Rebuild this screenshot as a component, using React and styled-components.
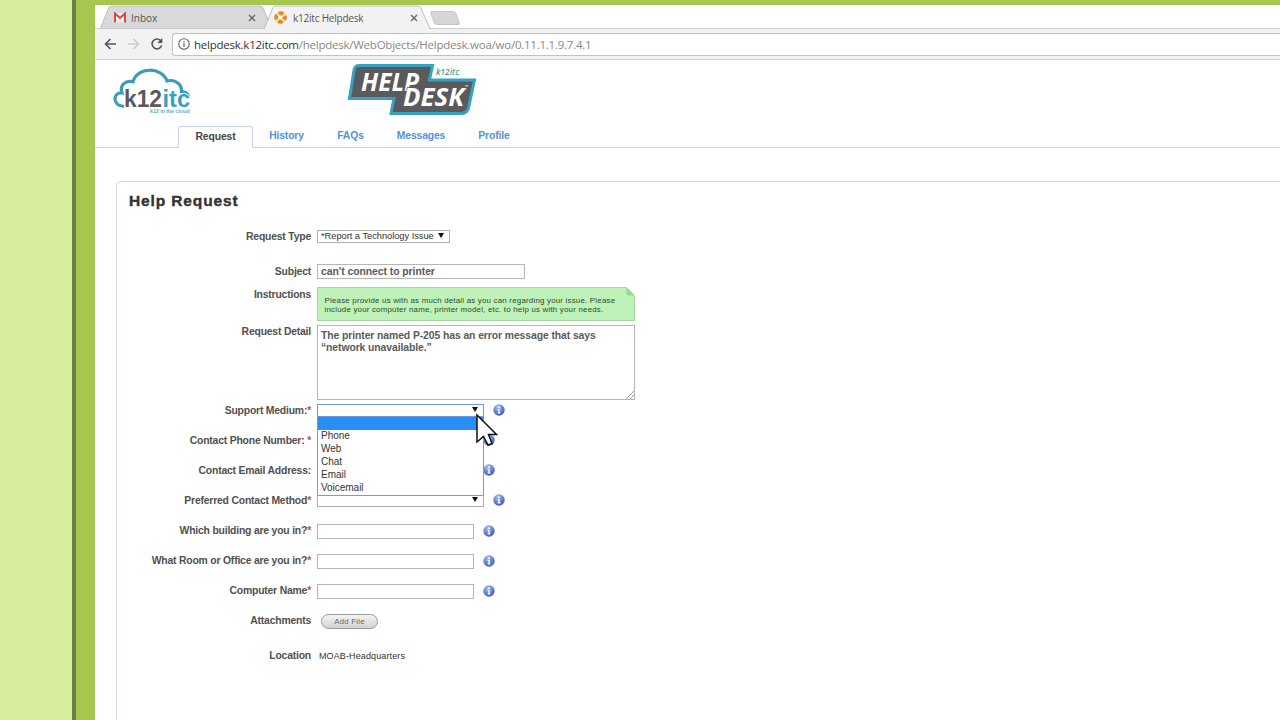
import React from 'react';
import styled, { createGlobalStyle } from 'styled-components';


const GlobalStyle = createGlobalStyle`
    body {
        margin: 0;
        overflow: hidden;
        font-family: "Liberation Sans", Arial, sans-serif;
    }

    * {
        box-sizing: border-box;
    }
`;

const Page = styled.div`
    display: flex;
    width: 1280px;
    height: 720px;
    background: #d6ed9e;
    padding-left: 72px;
    overflow: hidden;
`;

const Frame = styled.div`
    flex: 1;
    min-width: 0;
    border-left: 4px solid #6a8048;
    background: #a6c64f;
    padding: 5px 0 0 19px;
`;

const Browser = styled.div`
    height: 715px;
    background: #fff;
    overflow: hidden;
`;

const TabStrip = styled.div`
    display: flex;
    height: 24px;
    padding-left: 4px;
    border-bottom: 1px solid #cfcfcf;
`;

const BrowserTab = styled.div`
    position: relative;
    display: flex;
    align-items: center;
    width: ${props => props.$width}px;
    height: 24px;
    margin-right: -9px;
    padding: 1px ${props => props.$right}px 0 ${props => props.$left}px;
    z-index: ${props => (props.$active ? 2 : 1)};
`;

const TabShape = styled.svg`
    position: absolute;
    left: 0;
    top: 0;
    z-index: -1;
`;

const TabTitle = styled.span`
    flex: 1;
    margin-left: ${props => props.$gap}px;
    font-family: "Open Sans", sans-serif;
    font-size: 10px;
    letter-spacing: ${props => props.$spacing || 0}px;
    color: #555;
    white-space: nowrap;
`;

const NewTab = styled.div`
    width: 26px;
    height: 14px;
    margin: 6px 0 0 7px;
    border: 1px solid #c6c6c6;
    border-radius: 3px;
    background: #d6d6d6;
    transform: skewX(20deg);
`;

const Toolbar = styled.div`
    display: flex;
    align-items: center;
    height: 31px;
    padding-left: 8px;
    background: #f2f2f2;
    border-bottom: 1px solid #d4d4d4;
`;

const NavIcons = styled.svg`
    flex: none;
`;

const AddressBar = styled.div`
    display: flex;
    align-items: center;
    flex: 1;
    height: 23px;
    margin-left: 8px;
    padding-left: 5px;
    border: 1px solid #c2c2c2;
    border-right: 0;
    border-radius: 3px 0 0 3px;
    background: #fff;
`;

const Url = styled.span`
    margin-left: 4px;
    font-family: "Open Sans", sans-serif;
    font-size: 11.5px;
    letter-spacing: -0.24px;
    color: #888;
    white-space: nowrap;

    b {
        font-weight: 400;
        color: #333;
    }
`;

const Header = styled.header`
    display: flex;
    height: 66px;
    padding: 3px 0 0 17px;
`;

const CloudLogo = styled.svg`
    display: block;
    margin-right: 154px;
`;

const Nav = styled.nav`
    display: flex;
    align-items: flex-end;
    height: 22px;
    padding-left: 83px;
    border-bottom: 1px solid #c5d5ec;
`;

const NavItem = styled.a`
    width: ${props => props.$width}px;
    height: 21px;
    line-height: 20px;
    text-align: center;
    font-size: 10.4px;
    letter-spacing: -0.15px;
    font-weight: 700;
    color: #5790dd;
`;

const ActiveItem = styled(NavItem)`
    height: 22px;
    margin-bottom: -1px;
    border: 1px solid #c5d5ec;
    border-bottom: 0;
    border-radius: 3px 3px 0 0;
    background: #fff;
    color: #444;
`;

const Panel = styled.main`
    height: 560px;
    margin: 33px 0 0 21px;
    border: 1px solid #d0d4dc;
    border-right: 0;
    border-radius: 5px 0 0 0;
`;

const Title = styled.h1`
    height: 39px;
    margin: 0;
    padding: 9px 0 0 12px;
    font-size: 15.5px;
    line-height: 20px;
    letter-spacing: 0.87px;
    -webkit-text-stroke: 0.4px #333;
    color: #333;
`;

const Row = styled.div`
    display: flex;
    align-items: ${props => (props.$top ? 'flex-start' : 'center')};
    height: ${props => props.$height || 20}px;
    margin-top: ${props => props.$gap || 0}px;
`;

const Label = styled.label`
    width: 194px;
    margin-right: 6px;
    padding-top: ${props => props.$drop || 0}px;
    text-align: right;
    font-size: 10.4px;
    line-height: 14px;
    letter-spacing: -0.2px;
    font-weight: 700;
    color: #505050;
    white-space: pre;
`;

const Star = styled.span`
    color: #e0384a;
`;

const Field = styled.div`
    display: flex;
    align-items: center;
    width: ${props => props.$width}px;
    height: 15px;
    padding-left: 3px;
    border: 1px solid #b5b5b5;
    background: #fff;
    font-size: 10.4px;
    letter-spacing: -0.05px;
    font-weight: 700;
    color: #5a5a5a;
    white-space: nowrap;
`;

const Select = styled.div`
    position: relative;
    display: flex;
    align-items: center;
    justify-content: space-between;
    width: ${props => props.$width}px;
    height: 13px;
    padding: 0 5px 1px 3px;
    border: 1px solid ${props => (props.$open ? '#6f97dc' : '#b0b0b0')};
    background: #fff;
    font-size: 9.3px;
    letter-spacing: -0.03px;
    color: #333;
    white-space: nowrap;
`;

const Arrow = styled.i`
    border: 3px solid transparent;
    border-top: 5px solid #111;
    border-bottom: 0;
    margin-left: auto;
`;

const Menu = styled.div`
    position: absolute;
    left: -1px;
    top: 12px;
    z-index: 3;
    width: 167px;
    height: 79px;
    border: 1px solid #7b9bd0;
    border-top: 0;
    background: #fff;
`;

const Option = styled.div`
    height: ${props => (props.$selected ? 13.6 : 12.9)}px;
    padding-left: 3px;
    line-height: 12.9px;
    font-size: 10px;
    color: #333;
    background: ${props => (props.$selected ? '#2a8ff5' : 'none')};
`;

const Cursor = styled.svg`
    position: absolute;
    left: 157px;
    top: 8px;
    z-index: 4;
`;

const Note = styled.div`
    position: relative;
    width: 318px;
    height: 34px;
    padding: 8px 0 0 6.5px;
    border: 1px solid #a3d99f;
    background: #bff2b9;
    font-size: 7.9px;
    line-height: 9.2px;
    letter-spacing: 0.21px;
    color: #2c4a2c;
    white-space: nowrap;
`;

const Fold = styled.svg`
    position: absolute;
    right: -1px;
    top: -1px;
`;

const TextArea = styled.div`
    position: relative;
    width: 318px;
    height: 75px;
    padding: 4px 0 0 3px;
    border: 1px solid #b5b5b5;
    font-size: 10.4px;
    line-height: 12px;
    letter-spacing: -0.09px;
    font-weight: 700;
    color: #5a5a5a;
    white-space: nowrap;
`;

const Grip = styled.svg`
    position: absolute;
    right: 0;
    bottom: 0;
`;

const InfoSvg = styled.svg`
    flex: none;
    margin-left: 9px;
`;

const AddButton = styled.button`
    width: 57px;
    height: 15px;
    margin-left: 4px;
    padding: 1px 0 0;
    border: 1px solid #999;
    border-radius: 8px;
    background: linear-gradient(#f4f4f4, #d2d2d2);
    font-family: inherit;
    font-size: 7.8px;
    line-height: 12px;
    letter-spacing: 0.25px;
    color: #666;
`;

const Location = styled.span`
    margin-left: 2px;
    font-size: 9px;
    letter-spacing: 0.12px;
    color: #333;
`;


const Info = () => (
    <InfoSvg width="12" height="12" viewBox="0 0 12 12">
        <defs>
            <radialGradient id="ball" cx="0.4" cy="0.25" r="0.8">
                <stop offset="0" stopColor="#a9bdf0" />
                <stop offset="0.6" stopColor="#5f7fd2" />
                <stop offset="1" stopColor="#3c56a8" />
            </radialGradient>
        </defs>
        <circle cx="6" cy="6" r="5.7" fill="url(#ball)" />
        <circle cx="6" cy="3.2" r="1" fill="#fff" />
        <path d="M4.7 5.1h2v3.5h.8v.8H4.6v-.8h.7V5.9h-.6z" fill="#fff" />
    </InfoSvg>
);

const Close = () => (
    <svg width="8" height="8" viewBox="0 0 8 8">
        <path d="M1 1l6 6M7 1L1 7" stroke="#666" strokeWidth="1.4" />
    </svg>
);

const Chrome = () => (
    <>
        <TabStrip>
            <BrowserTab $width={174} $left={14} $right={17}>
                <TabShape width="174" height="24">
                    <path d="M1 24L10 2.500Q10.500 1 12 1H161Q163 1 164 3L173 24Z" fill="#d9d9d9" stroke="#bdbdbd" />
                </TabShape>
                <svg width="14" height="11" viewBox="0 0 14 11">
                    <path d="M1 1h12v9.500H1z" fill="#f3eeee" />
                    <path d="M2 10.500V1.500L7 6l5-4.500v9" fill="none" stroke="#d34b48" strokeWidth="2" />
                </svg>
                <TabTitle $gap={4}>Inbox</TabTitle>
                <Close />
            </BrowserTab>
            <BrowserTab $active $width={170} $left={10} $right={16}>
                <TabShape width="170" height="24">
                    <path d="M0 24.500L9 2.500Q9.500 1 11 1H154Q156 1 157 3L166 24.500Z" fill="#f2f2f2" />
                    <path d="M0 24L9 2.500Q9.500 1 11 1H154Q156 1 157 3L166 24" fill="none" stroke="#bdbdbd" />
                </TabShape>
                <svg width="13" height="13" viewBox="0 0 13 13">
                    <circle cx="6.500" cy="6.500" r="4.300" fill="none" stroke="#f3d3a0" strokeWidth="3.200" />
                    <circle cx="6.500" cy="6.500" r="4.300" fill="none" stroke="#e08a1c" strokeWidth="4" strokeDasharray="4.400 2.354" strokeDashoffset="2.200" />
                </svg>
                <TabTitle $gap={6} $spacing={-0.22}>k12itc Helpdesk</TabTitle>
                <Close />
            </BrowserTab>
            <NewTab />
        </TabStrip>
        <Toolbar>
            <NavIcons width="61" height="16" viewBox="0 0 61 16" fill="none" stroke="#555" strokeWidth="1.600">
                <path d="M13 8H2.500M7.500 3L2.500 8l5 5" />
                <path d="M25 8h10.500M30.500 3l5 5-5 5" stroke="#ccc" />
                <path d="M57.500 4.500A4.900 4.900 0 1 0 58.600 9.500" />
                <path d="M59.300 2v5h-5z" fill="#555" stroke="none" />
            </NavIcons>
            <AddressBar>
                <svg width="12" height="12" viewBox="0 0 12 12" fill="none" stroke="#666">
                    <circle cx="6" cy="6" r="5.300" strokeWidth="1.100" />
                    <path d="M6 5.200V9M6 3v1.300" strokeWidth="1.300" />
                </svg>
                <Url><b>helpdesk.k12itc.com</b>/helpdesk/WebObjects/Helpdesk.woa/wo/0.11.1.1.9.7.4.1</Url>
            </AddressBar>
        </Toolbar>
    </>
);

const Logos = () => (
    <Header>
        <CloudLogo width="80" height="52" viewBox="112 63 80 52">
            <path
                d="M124 106.500C112 106 112.500 92 122 93C119.500 85.500 125 80 133 81.800C137 66.500 162 66.500 167 81C175 79 182 84 181.500 91.500C185 91.500 188 93.500 188.700 97"
                fill="none"
                stroke="#3a9dbd"
                strokeWidth="3.200"
            />
            <g fontFamily="Liberation Sans" fontWeight="700" fontSize="24.500" stroke="#fff" strokeWidth="1.600" paintOrder="stroke">
                <text x="124" y="106.500" textLength="38" lengthAdjust="spacingAndGlyphs" fill="#58595b">k12</text>
                <text x="162.500" y="106.500" textLength="27.500" lengthAdjust="spacingAndGlyphs" fill="#36a0c4">itc</text>
            </g>
            <text x="150" y="112.500" fontFamily="Liberation Sans" fontWeight="700" fontSize="5.500" textLength="39.500" fill="#62b3c8">k12 in the cloud</text>
        </CloudLogo>
        <svg width="132" height="54" viewBox="346 63 132 54">
            <path
                d="M359 65.500H432.500L429.500 80H474.500L468.500 108Q467 113.500 461 113.500H391L394 98.500H349.500L354 70Q355 65.500 359 65.500Z"
                fill="#5a5a5d"
                stroke="#35a3c0"
                strokeWidth="3"
            />
            <g fontFamily="Open Sans" fontStyle="italic" fontWeight="700" fill="#fff">
                <text x="361" y="90.500" fontSize="24.500" textLength="58" lengthAdjust="spacingAndGlyphs">HELP</text>
                <text x="403" y="105.500" fontSize="24.500" textLength="61" lengthAdjust="spacingAndGlyphs" stroke="#5a5a5d" strokeWidth="1.500" paintOrder="stroke">DESK</text>
                <text x="465" y="88" fontSize="4">™</text>
                <text x="436" y="75" fontSize="8" fontWeight="600" textLength="23" fill="#3c9a9c">k12itc</text>
            </g>
        </svg>
    </Header>
);

const options = ['', 'Phone', 'Web', 'Chat', 'Email', 'Voicemail'];

const App = () => {
    return (
        <Page>
            <GlobalStyle />
            <Frame>
                <Browser>
                    <Chrome />
                    <Logos />
                    <Nav>
                        <ActiveItem $width={75}>Request</ActiveItem>
                        <NavItem $width={67}>History</NavItem>
                        <NavItem $width={61}>FAQs</NavItem>
                        <NavItem $width={80}>Messages</NavItem>
                        <NavItem $width={66}>Profile</NavItem>
                    </Nav>
                    <Panel>
                        <Title>Help Request</Title>

                        <Row $height={30}>
                            <Label $drop={1}>Request Type</Label>
                            <Select $width={133}>*Report a Technology Issue<Arrow /></Select>
                        </Row>
                        <Row $height={31} $gap={5}>
                            <Label>Subject</Label>
                            <Field $width={208}>can't connect to printer</Field>
                        </Row>
                        <Row $top $height={38}>
                            <Label $drop={1}>Instructions</Label>
                            <Note>
                                Please provide us with as much detail as you can regarding your issue. Please<br />
                                include your computer name, printer model, etc. to help us with your needs.
                                <Fold width="9" height="9">
                                    <path d="M0 0h9v9z" fill="#fff" />
                                    <path d="M.5 0L9 8.500H2.500Q.5 8.500 .5 6.500z" fill="#93dc8e" />
                                </Fold>
                            </Note>
                        </Row>
                        <Row $top $height={75}>
                            <Label>Request Detail</Label>
                            <TextArea>
                                The printer named P-205 has an error message that says<br />
                                “network unavailable.”
                                <Grip width="8" height="8">
                                    <path d="M0 8L8 0M4 8l4-4" stroke="#999" />
                                </Grip>
                            </TextArea>
                        </Row>

                        <Row>
                            <Label $drop={2}>Support Medium:<Star>*</Star></Label>
                            <Select $open $width={167}>
                                <Arrow />
                                <Menu>
                                    {options.map((name, i) => (
                                        <Option key={i} $selected={i === 0}>{name}</Option>
                                    ))}
                                </Menu>
                                <Cursor width="24" height="36" viewBox="0 0 24 36">
                                    <path d="M2 2V29L8.500 23.500L13 32L17 30.500L13.500 21.500H21.500Z" fill="#fff" stroke="#111" strokeWidth="1.500" />
                                </Cursor>
                            </Select>
                            <Info />
                        </Row>
                        <Row $gap={10}>
                            <Label $drop={2}>Contact Phone Number: <Star>*</Star></Label>
                            <Field $width={157} />
                            <Info />
                        </Row>
                        <Row $gap={10}>
                            <Label $drop={2}>Contact Email Address:</Label>
                            <Field $width={157} />
                            <Info />
                        </Row>
                        <Row $gap={10}>
                            <Label $drop={2}>Preferred Contact Method<Star>*</Star></Label>
                            <Select $width={167}><Arrow /></Select>
                            <Info />
                        </Row>
                        <Row $gap={11}>
                            <Label>Which building are you in?<Star>*</Star></Label>
                            <Field $width={157} />
                            <Info />
                        </Row>
                        <Row $gap={10}>
                            <Label>What Room or Office are you in?<Star>*</Star></Label>
                            <Field $width={157} />
                            <Info />
                        </Row>
                        <Row $gap={10}>
                            <Label>Computer Name<Star>*</Star></Label>
                            <Field $width={157} />
                            <Info />
                        </Row>
                        <Row $gap={10}>
                            <Label>Attachments</Label>
                            <AddButton>Add File</AddButton>
                        </Row>
                        <Row $gap={15}>
                            <Label>Location</Label>
                            <Location>MOAB-Headquarters</Location>
                        </Row>
                    </Panel>
                </Browser>
            </Frame>
        </Page>
    );
}

export default App;
